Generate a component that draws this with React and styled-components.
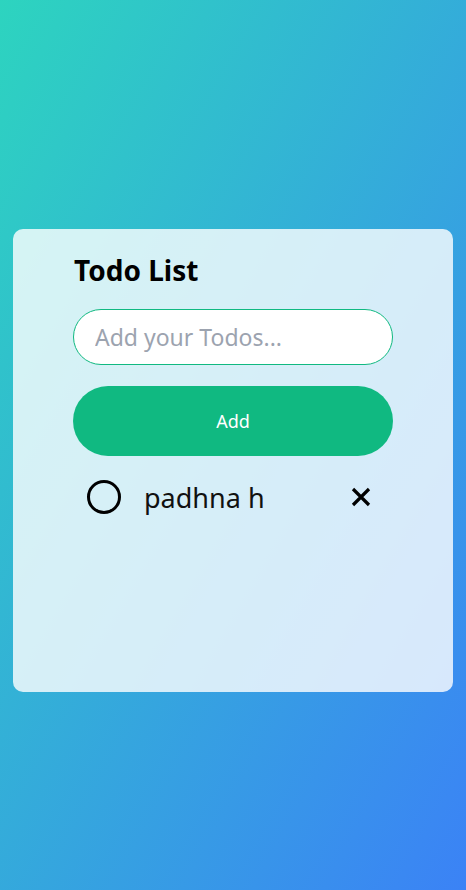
import React from "react";
import styled, { createGlobalStyle } from "styled-components";

const Global = createGlobalStyle`
  html, body { margin: 0; padding: 0; }
  body {
    font-family: "Noto Sans", "Open Sans", sans-serif;
    min-height: 890px;
    background: linear-gradient(120deg, #2dd4bf 0%, #3b82f6 100%);
  }
  * { box-sizing: border-box; }
`;

const Page = styled.div`
  min-height: 890px;
  display: flex;
  flex-direction: column;
  padding: 229px 13px 0;
`;

const Card = styled.div`
  width: 440px;
  height: 463px;
  background: rgba(255, 255, 255, 0.8);
  border-radius: 10px;
  padding: 21px 60px 0;
  display: flex;
  flex-direction: column;
`;

const Title = styled.h1`
  margin: 0 0 0 1px;
  font-size: 28px;
  font-weight: 700;
  color: #000;
  line-height: 40px;
`;

const Input = styled.input`
  margin-top: 19px;
  height: 56px;
  width: 320px;
  border: 1px solid #10b981;
  border-radius: 999px;
  background: #fff;
  padding: 0 21px;
  font-family: inherit;
  font-size: 23px;
  outline: none;
  &::placeholder { color: #9ca3af; }
`;

const Button = styled.button`
  margin-top: 21px;
  height: 70px;
  width: 320px;
  border: none;
  border-radius: 999px;
  background: #10b981;
  color: #fff;
  font-family: inherit;
  font-size: 18px;
`;

const Item = styled.div`
  margin-top: 22px;
  display: flex;
  align-items: center;
  padding-left: 13px;
  height: 38px;
`;

const Text = styled.span`
  margin-left: 22px;
  font-size: 27px;
  color: #111;
  flex: 1;
`;

const Close = styled.span`
  margin-right: 21px;
  line-height: 1;
  display: flex;
`;

export default function App() {
  return (
    <>
      <Global />
      <Page>
        <Card>
          <Title>Todo List</Title>
          <Input placeholder="Add your Todos..." />
          <Button>Add</Button>
          <Item>
            <svg width="36" height="36" viewBox="0 0 36 36">
              <circle cx="18" cy="18" r="15.5" fill="none" stroke="#000" strokeWidth="3" />
            </svg>
            <Text>padhna h</Text>
            <Close>
              <svg width="22" height="22" viewBox="0 0 22 22">
                <path d="M3 3 L19 19 M19 3 L3 19" stroke="#000" strokeWidth="3.2" />
              </svg>
            </Close>
          </Item>
        </Card>
      </Page>
    </>
  );
}
